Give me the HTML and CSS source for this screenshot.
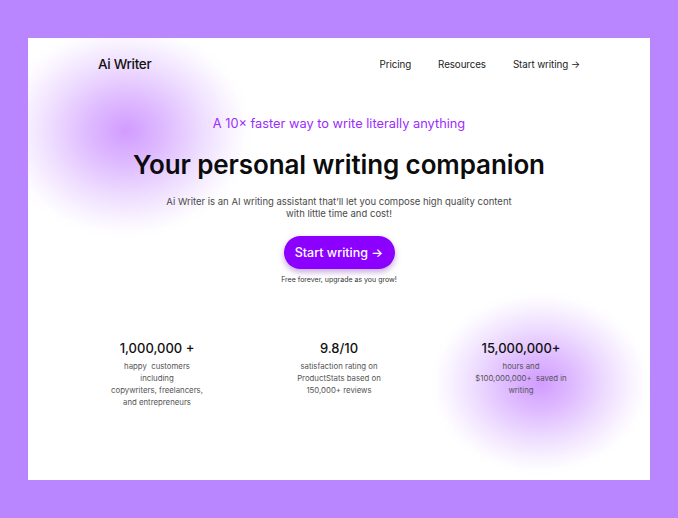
FILE: index.html
```html
<!DOCTYPE html>
<html>
<head>
<meta charset="utf-8">
<link rel="stylesheet" href="styles.css">
</head>
<body>
<div class="card">
  <div class="glow glow-a"></div>
  <div class="glow glow-b"></div>
  <header class="nav">
    <div class="logo">Ai Writer</div>
    <nav class="links">
      <a>Pricing</a>
      <a>Resources</a>
      <a>Start writing →</a>
    </nav>
  </header>
  <section class="hero">
    <p class="tagline">A 10× faster way to write literally anything</p>
    <h1 class="title">Your personal writing companion</h1>
    <p class="lead">Ai Writer is an AI writing assistant that’ll let you compose high quality content<br>with little time and cost!</p>
    <button class="cta">Start writing →</button>
    <p class="note">Free forever, upgrade as you grow!</p>
  </section>
  <section class="stats">
    <div class="stat">
      <div class="num">1,000,000 +</div>
      <div class="desc">happy &nbsp;customers<br>including<br>copywriters, freelancers,<br>and entrepreneurs</div>
    </div>
    <div class="stat">
      <div class="num">9.8/10</div>
      <div class="desc">satisfaction rating on<br>ProductStats based on<br>150,000+ reviews</div>
    </div>
    <div class="stat">
      <div class="num">15,000,000+</div>
      <div class="desc">hours and<br>$100,000,000+ &nbsp;saved in<br>writing</div>
    </div>
  </section>
</div>
</body>
</html>
```
FILE: styles.css
```css
* { box-sizing: border-box; }
html, body { margin: 0; padding: 0; }
body {
  background: #b986ff;
  width: 678px;
  height: 518px;
  padding: 38px 28px;
  font-family: Inter, "Noto Sans", sans-serif;
}
.card {
  position: relative;
  overflow: hidden;
  background: #fff;
  width: 622px;
  height: 442px;
  padding: 0 70px;
}
.glow {
  position: absolute;
  pointer-events: none;
}
.glow-a {
  left: -30px;
  top: -16px;
  width: 256px;
  height: 218px;
  background: radial-gradient(closest-side, rgba(204,145,255,0.9) 0%, rgba(210,160,255,0.72) 30%, rgba(222,188,255,0.5) 60%, rgba(236,216,255,0.3) 82%, rgba(248,240,255,0.1) 94%, rgba(255,255,255,0) 100%);
}
.glow-b {
  left: 400px;
  top: 252px;
  width: 224px;
  height: 186px;
  background: radial-gradient(closest-side, rgba(204,145,255,0.9) 0%, rgba(210,160,255,0.72) 30%, rgba(222,188,255,0.5) 60%, rgba(236,216,255,0.3) 82%, rgba(248,240,255,0.1) 94%, rgba(255,255,255,0) 100%);
}
.nav {
  position: relative;
  display: flex;
  justify-content: space-between;
  align-items: center;
  height: 52px;
}
.logo {
  font-size: 13.5px;
  font-weight: 500;
  color: #111;
  letter-spacing: -0.3px;
}
.links {
  display: flex;
  gap: 27px;
  font-size: 9.8px;
  letter-spacing: -0.1px;
  color: #222;
}
.hero {
  position: relative;
  display: flex;
  flex-direction: column;
  align-items: center;
  text-align: center;
}
.tagline {
  margin: 25px 0 0;
  font-size: 12.8px;
  color: #9b2cff;
  line-height: 18px;
}
.title {
  margin: 16px 0 0;
  font-size: 26px;
  font-weight: 600;
  line-height: 32px;
  color: #0c0c0c;
  letter-spacing: -0.1px;
}
.lead {
  margin: 15px 0 0;
  font-size: 9.5px;
  line-height: 12px;
  color: #4a4a4a;
}
.cta {
  margin-top: 16px;
  width: 111px;
  height: 33px;
  border: none;
  border-radius: 17px;
  background: #8c00ff;
  color: #fff;
  font-family: inherit;
  font-size: 12.5px;
  font-weight: 500;
  box-shadow: 0 3px 6px rgba(90,0,160,0.35);
}
.note {
  margin: 6px 0 0;
  font-size: 7px;
  color: #333;
}
.stats {
  position: relative;
  display: grid;
  grid-template-columns: repeat(3, 182px);
  justify-content: center;
  margin: 55px -70px 0;
  text-align: center;
}
.num {
  font-size: 13px;
  font-weight: 500;
  color: #111;
  line-height: 18px;
}
.desc {
  margin-top: 3px;
  font-size: 7.8px;
  line-height: 12px;
  color: #555;
}
```
